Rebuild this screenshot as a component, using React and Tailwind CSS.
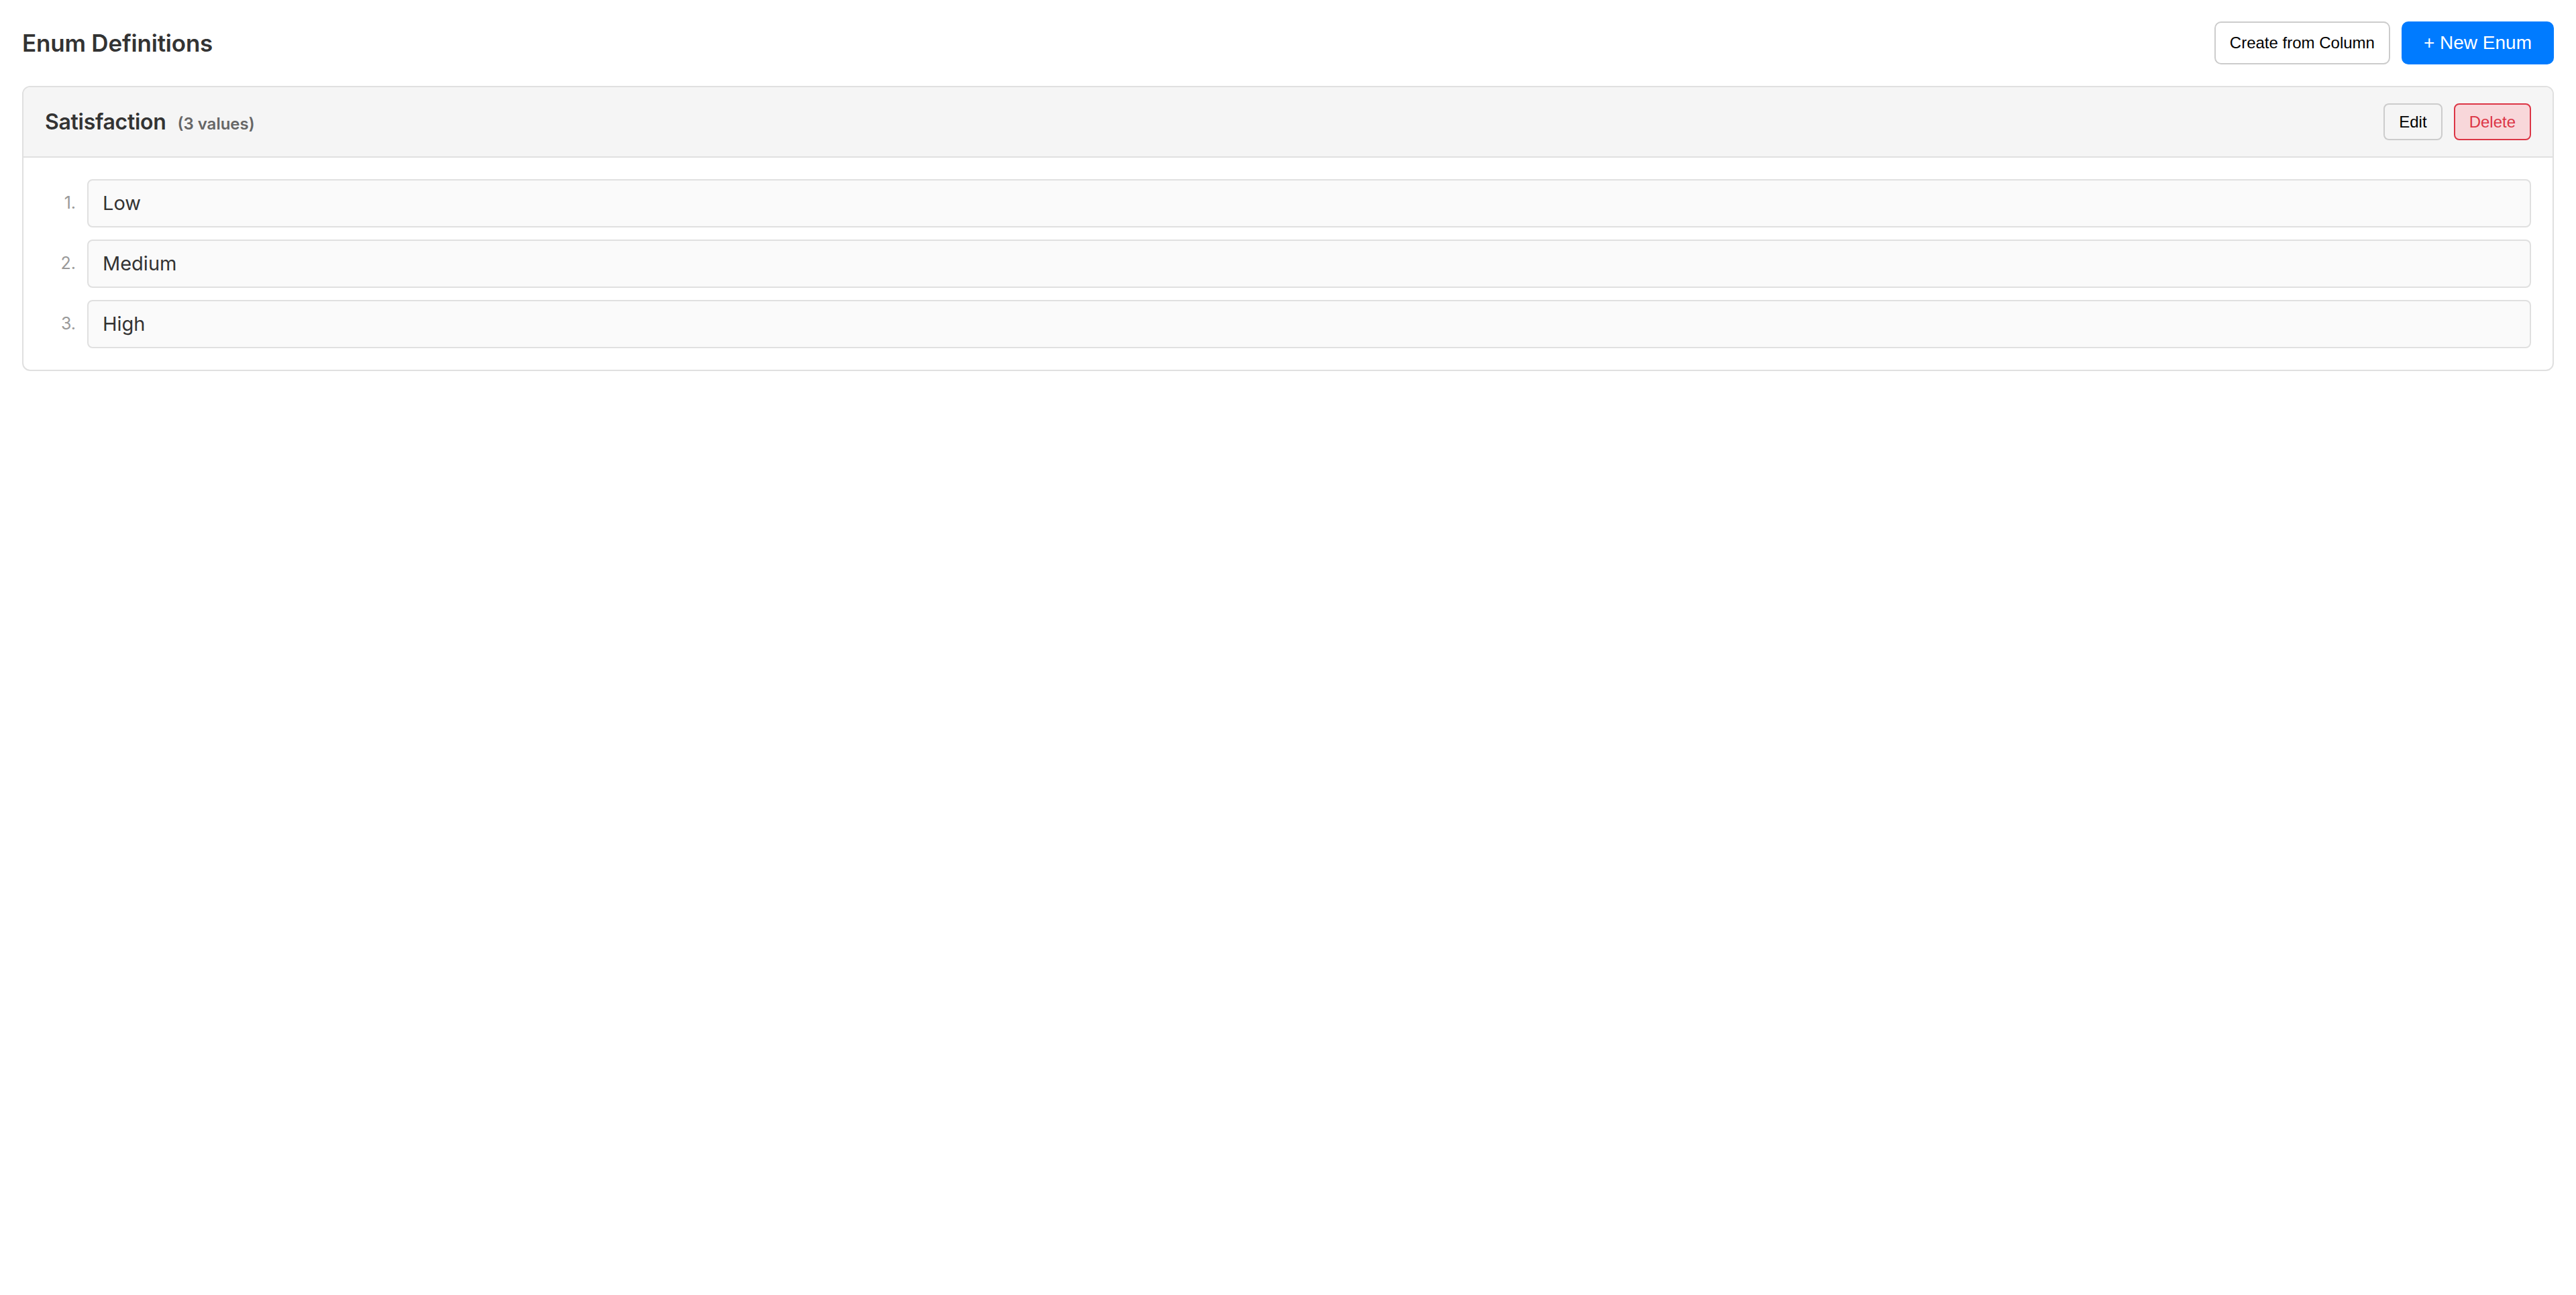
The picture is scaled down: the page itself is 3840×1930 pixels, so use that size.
import React from 'react';

const values = ['Low', 'Medium', 'High'];

export default function App() {
  return (
    <div className="min-h-screen bg-white px-[33px] py-[32px] text-[#333]" style={{ fontFamily: 'Inter, "Noto Sans", sans-serif' }}>
      {/* Page header */}
      <div className="flex items-center justify-between h-[64px]">
        <h1 className="text-[35px] font-semibold tracking-[-0.2px] text-[#333]">Enum Definitions</h1>
        <div className="flex items-center gap-[17px]">
          <button className="h-[64px] px-[21px] bg-white border-2 border-[#ccc] rounded-[10px] text-[24px] text-black font-['Liberation_Sans',Arial,sans-serif]">
            Create from Column
          </button>
          <button className="h-[64px] px-[33px] bg-[#007bff] rounded-[10px] text-[28px] text-white font-['Liberation_Sans',Arial,sans-serif]">
            + New Enum
          </button>
        </div>
      </div>

      {/* Enum card */}
      <div className="mt-[32px] border-2 border-[#e0e0e0] rounded-[12px] overflow-hidden">
        <div className="h-[105px] flex items-center justify-between px-[32px] bg-[#f5f5f5] border-b-2 border-[#e0e0e0]">
          <div className="flex items-baseline gap-[17px]">
            <span className="text-[32px] font-semibold tracking-[-0.3px] text-[#333]">Satisfaction</span>
            <span className="text-[24px] font-semibold text-[#666]">(3 values)</span>
          </div>
          <div className="flex items-center gap-[17px]">
            <button className="h-[55px] px-[21px] bg-[#f5f5f5] border-2 border-[#ccc] rounded-[8px] text-[24px] text-black font-['Liberation_Sans',Arial,sans-serif]">
              Edit
            </button>
            <button className="h-[55px] px-[21px] bg-[#f8d7da] border-2 border-[#dc3545] rounded-[8px] text-[24px] text-[#dc3545] font-['Liberation_Sans',Arial,sans-serif]">
              Delete
            </button>
          </div>
        </div>
        <div className="flex flex-col gap-[18px] px-[32px] pt-[32px] pb-[32px]">
          {values.map((v, i) => (
            <div key={v} className="flex items-center gap-[17px]">
              <span className="w-[46px] text-right text-[25px] text-[#999]">{i + 1}.</span>
              <div className="flex-1 h-[72px] flex items-center px-[21px] bg-[#fafafa] border-2 border-[#e0e0e0] rounded-[8px] text-[29px] text-[#333]">
                {v}
              </div>
            </div>
          ))}
        </div>
      </div>
    </div>
  );
}
